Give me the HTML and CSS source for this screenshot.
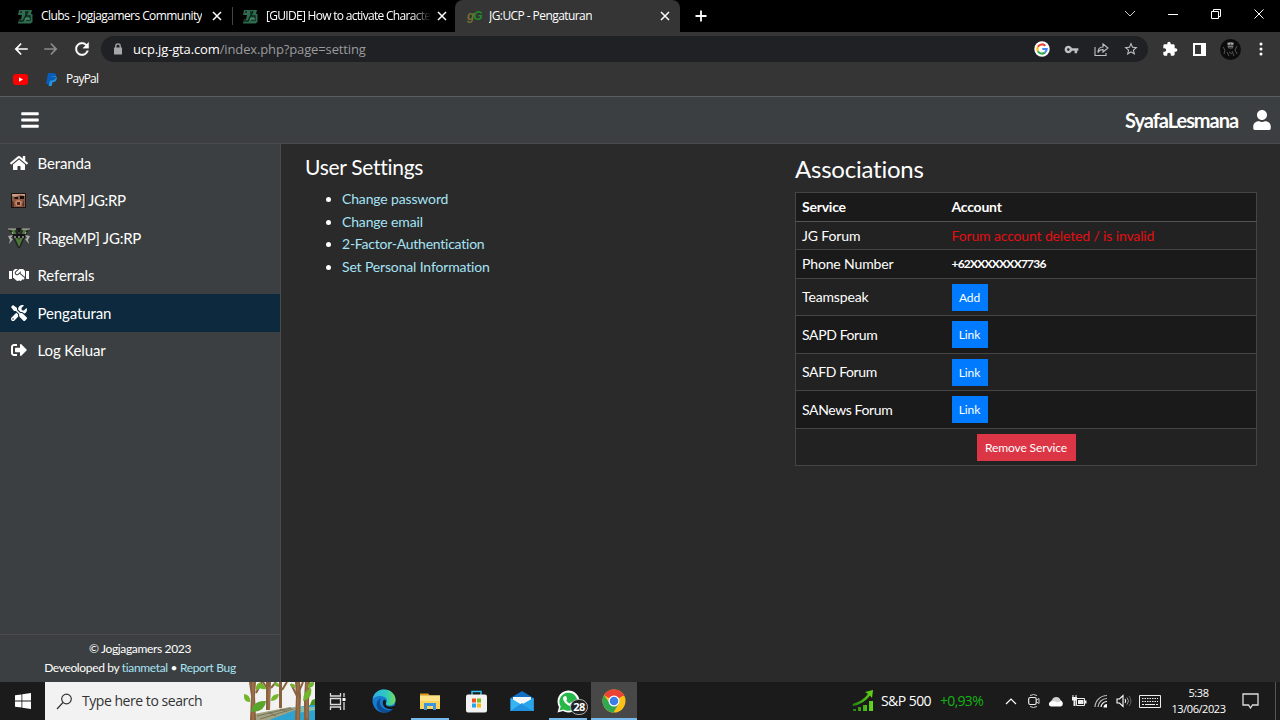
FILE: index.html
```
<!DOCTYPE html>
<html lang="id">
<head>
<meta charset="utf-8">
<title>JG:UCP - Pengaturan</title>
<link rel="stylesheet" href="styles.css">
</head>
<body>
<svg width="0" height="0" class="defs">
    <symbol id="x" viewBox="0 0 10 10"><path d="M1 1l8 8M9 1l-8 8" stroke="#fff" stroke-width="1.5" fill="none"/></symbol>
    <symbol id="jg" viewBox="0 0 15 15"><path d="M1 1h13l-1 4h1.500v8l-2 1.500H0l1-4h2L4 6H0z" fill="#2d6b4f"/><path d="M2 3h6v3L5 12H1M10 2L8 7h4v4H8" stroke="#10251c" stroke-width="1.300" fill="none"/><path d="M4 3h3M7 10h5" stroke="#57a57c" fill="none"/></symbol>
</svg>

<!-- browser -->
<div class="tabs">
    <div class="tab">
        <svg class="fav" width="15" height="15"><use href="#jg"/></svg>
        <span class="title t1">Clubs - Jogjagamers Community</span>
        <svg class="close" width="10" height="10"><use href="#x"/></svg>
    </div>
    <div class="tab second">
        <svg class="fav" width="15" height="15"><use href="#jg"/></svg>
        <span class="title t2">[GUIDE] How to activate Character</span>
        <svg class="close" width="10" height="10"><use href="#x"/></svg>
    </div>
    <div class="tab active">
        <span class="jgfav"><i>g</i><b>G</b></span>
        <span class="title t1">JG:UCP - Pengaturan</span>
        <svg class="close" width="10" height="10"><use href="#x"/></svg>
    </div>
    <svg class="plus" width="12" height="12" viewBox="0 0 12 12"><path d="M6 .5v11M.5 6h11" stroke="#fff" stroke-width="1.800"/></svg>
    <div class="win">
        <span><svg width="12" height="12" viewBox="0 0 12 12"><path d="M1 3l5 5 5-5" stroke="#ccc" fill="none"/></svg></span>
        <span><svg width="12" height="12" viewBox="0 0 12 12"><path d="M1 6.500h10" stroke="#fff"/></svg></span>
        <span><svg width="12" height="12" viewBox="0 0 12 12"><path d="M1.500 3.500h7v7h-7zM3.500 3.500v-2h7v7h-2" stroke="#fff" fill="none"/></svg></span>
        <span><svg width="12" height="12" viewBox="0 0 12 12"><path d="M1.500 1.500l9 9M10.500 1.500l-9 9" stroke="#fff"/></svg></span>
    </div>
</div>

<div class="toolbar">
    <svg class="nav" width="18" height="18" viewBox="0 0 24 24"><path fill="#fff" d="M21 11H7.830l5.090-5.590L11.500 4l-8 8 8 8 1.420-1.410L7.830 13H21v-2z"/></svg>
    <svg class="nav" width="18" height="18" viewBox="0 0 24 24"><path fill="#8a8a8a" d="M3 11h13.170l-5.090-5.590L12.500 4l8 8-8 8-1.420-1.410L16.170 13H3v-2z"/></svg>
    <svg class="nav" width="20" height="20" viewBox="0 0 24 24"><path fill="#fff" stroke="#fff" stroke-width=".4" d="M17.650 6.350C16.200 4.900 14.210 4 12 4c-4.420 0-7.990 3.580-7.990 8s3.570 8 7.990 8c3.730 0 6.840-2.550 7.730-6h-2.080c-.82 2.330-3.040 4-5.650 4-3.310 0-6-2.690-6-6s2.690-6 6-6c1.660 0 3.140.69 4.220 1.780L13 11h7V4l-2.350 2.350z"/></svg>
    <div class="omnibox">
        <svg width="10" height="12" viewBox="0 0 10 12"><path d="M1 4.500h8v7H1z" fill="#a5a8ab"/><path d="M2.800 5V3a2.200 2.200 0 0 1 4.400 0v2" stroke="#a5a8ab" stroke-width="1.300" fill="none"/></svg>
        <p class="url"><b>ucp.jg-gta.com</b>/index.php?page=setting</p>
        <div class="actions">
            <svg width="16" height="16" viewBox="0 0 16 16"><circle cx="8" cy="8" r="7.700" fill="#fff"/><g fill="none" stroke-width="2.100"><path d="M11.300 4.700A4.700 4.700 0 0 0 3.900 5.800" stroke="#ea4335"/><path d="M3.900 5.800a4.700 4.700 0 0 0 0 4.400" stroke="#fbbc05"/><path d="M3.900 10.200a4.700 4.700 0 0 0 7 1.400" stroke="#34a853"/><path d="M10.900 11.600A4.700 4.700 0 0 0 12.700 8H8.300" stroke="#4285f4"/></g></svg>
            <svg width="15" height="15" viewBox="0 0 24 24"><path fill="#bdc1c6" d="M12.650 10C11.830 7.670 9.610 6 7 6c-3.310 0-6 2.690-6 6s2.690 6 6 6c2.610 0 4.830-1.670 5.650-4H17v4h4v-4h2v-4H12.650zM7 14c-1.100 0-2-.9-2-2s.9-2 2-2 2 .9 2 2-.9 2-2 2z"/></svg>
            <svg width="15" height="15" viewBox="0 0 15 15"><path d="M1 5v8.500h11V11M4 10.500c0-3.500 2-5.500 5-5.500V2l5 4-5 4V7.500c-2.500 0-4 .8-5 3z" stroke="#bdc1c6" stroke-width="1.100" fill="none"/></svg>
            <svg width="16" height="16" viewBox="0 0 24 24"><path fill="#bdc1c6" d="M22 9.240l-7.190-.62L12 2 9.190 8.630 2 9.240l5.460 4.730L5.820 21 12 17.270 18.180 21l-1.630-7.030L22 9.240zM12 15.400l-3.760 2.270 1-4.280-3.320-2.880 4.380-.38L12 6.100l1.710 4.040 4.380.38-3.320 2.880 1 4.280L12 15.400z"/></svg>
        </div>
    </div>
    <div class="ext">
        <svg width="16" height="16" viewBox="0 0 24 24"><path fill="#fff" d="M20.500 11H19V7c0-1.100-.9-2-2-2h-4V3.500C13 2.120 11.880 1 10.500 1S8 2.120 8 3.500V5H4c-1.100 0-1.990.9-1.990 2v3.800H3.500c1.490 0 2.700 1.210 2.700 2.700s-1.210 2.700-2.700 2.700H2V20c0 1.100.9 2 2 2h3.800v-1.500c0-1.490 1.210-2.700 2.700-2.700 1.490 0 2.700 1.210 2.700 2.700V22H17c1.100 0 2-.9 2-2v-4h1.500c1.380 0 2.500-1.120 2.500-2.500S21.880 11 20.500 11z"/></svg>
        <svg width="13" height="13" viewBox="0 0 13 13"><path fill="#fff" d="M0 0h13v13H0zM2 2v9h6V2z" fill-rule="evenodd"/></svg>
        <svg width="21" height="21" viewBox="0 0 21 21"><circle cx="10.500" cy="10.500" r="10.500" fill="#0c0c0c"/><path d="M7 4q3.500-2 7 0l-1 5q-2.500 2-5 0z" fill="#777"/><path d="M7 6h7M8.500 9h4" stroke="#111"/><path d="M3 8l2 3-1 4M17 7l-2 4 2 4M7 13l2 4M12 12l2 5M9 13l3 2" stroke="#555" fill="none"/><circle cx="9" cy="5" r=".8" fill="#eee"/><circle cx="12" cy="5" r=".8" fill="#eee"/></svg>
        <svg width="4" height="14" viewBox="0 0 4 14"><g fill="#fff"><circle cx="2" cy="2" r="1.500"/><circle cx="2" cy="7" r="1.500"/><circle cx="2" cy="12" r="1.500"/></g></svg>
    </div>
</div>
<div class="bookmarks">
    <svg width="15" height="11" viewBox="0 0 15 11"><rect width="15" height="11" rx="3" fill="#f00"/><path d="M6 3.300l4 2.200-4 2.200z" fill="#fff"/></svg>
    <svg class="pp" width="11" height="13" viewBox="0 0 11 13"><path d="M2 0h5c3 0 3.500 2 3 4-.6 2.500-2.400 3.500-5 3.500H4L3 11H0z" fill="#0b5cb8"/><path d="M4 3h5c2 .5 2 2 1.600 3.300C10 8.500 8.500 9.300 6.500 9.300L5.700 13H2.500L3 11l1-3.500h1c2.600 0 4.400-1 5-3.500" fill="#1d96e8"/></svg>
    <span>PayPal</span>
</div>

<!-- page -->
<div class="header">
    <svg class="bars" width="18" height="20" viewBox="0 0 448 512"><path fill="#fff" d="M16 132h416c9 0 16-7 16-16V76c0-9-7-16-16-16H16C7 60 0 67 0 76v40c0 9 7 16 16 16zm0 160h416c9 0 16-7 16-16v-40c0-9-7-16-16-16H16c-9 0-16 7-16 16v40c0 9 7 16 16 16zm0 160h416c9 0 16-7 16-16v-40c0-9-7-16-16-16H16c-9 0-16 7-16 16v40c0 9 7 16 16 16z"/></svg>
    <div class="user">
        <b>SyafaLesmana</b>
        <svg width="18" height="20" viewBox="0 0 448 512"><path fill="#fff" d="M224 256c70.700 0 128-57.300 128-128S294.700 0 224 0 96 57.300 96 128s57.300 128 128 128zm89.600 32h-16.700c-22.200 10.200-46.900 16-72.900 16s-50.600-5.800-72.900-16h-16.700C60.200 288 0 348.200 0 422.400V464c0 26.500 21.500 48 48 48h352c26.500 0 48-21.500 48-48v-41.600c0-74.200-60.200-134.400-134.400-134.400z"/></svg>
    </div>
</div>
<div class="page">
    <div class="sidebar">
        <ul>
            <li><span class="ico"><svg width="18" height="16" viewBox="0 0 576 512"><path fill="#fff" d="M280.370 148.260L96 300.110V464a16 16 0 0 0 16 16l112.060-.29a16 16 0 0 0 15.920-16V368a16 16 0 0 1 16-16h64a16 16 0 0 1 16 16v95.640a16 16 0 0 0 16 16.050L464 480a16 16 0 0 0 16-16V300L295.670 148.260a12.190 12.190 0 0 0-15.300 0zM571.600 251.470L488 182.560V44.050a12 12 0 0 0-12-12h-56a12 12 0 0 0-12 12v72.610L318.470 43a48 48 0 0 0-61 0L4.340 251.470a12 12 0 0 0-1.600 16.900l25.500 31A12 12 0 0 0 45.150 301l235.220-193.740a12.190 12.190 0 0 1 15.300 0L530.900 301a12 12 0 0 0 16.900-1.600l25.500-31a12 12 0 0 0-1.700-16.930z"/></svg></span>Beranda</li>
            <li class="samp"><span class="ico"><svg width="15" height="15" viewBox="0 0 15 15"><path d="M0 0h15v15H0z" fill="#1c1310"/><path d="M1 1h13v13H1z" fill="#8d5a45"/><path d="M1 1h13v2L9 2 4 4 1 3z" fill="#c59a80"/><path d="M3 4h4v2H4zM9 3h4v3H9z" fill="#18100e"/><path d="M4 9q3-4 7 0l-1 4H5z" fill="#c58466"/><path d="M6 9h3v3H6z" fill="#4a241b"/><path d="M1 7l2 3v4H1zM13 7v7l-2-2z" fill="#5a3022"/></svg></span>[SAMP] JG:RP</li>
            <li class="rage"><span class="ico"><svg width="24" height="20" viewBox="0 0 24 20"><path d="M1 0h9v2L12 8l3-6V0h8v2l-2 1-8 17h-2L3 3 1 2z" fill="#222"/><path d="M2 1h7L8 3l4 9 4-9-1-2h7l-3 2-7 16L5 3z" fill="#4d7a38"/><path d="M1 1h8M15 1h8M5 4l1 2M19 4l-1 2" stroke="#c4c4c4" fill="none"/><path d="M6 6h12v4H6z" fill="#151515"/><path d="M1 8l5-1-2 3 2 1-4 5 1-4zM23 8l-5-1 2 3-2 1 4 5-1-4z" fill="#aaa"/><path d="M7 9h2M11 9h2M15 9h2" stroke="#ddd"/><path d="M10 0h4l-1 4h-2z" fill="#141414"/></svg></span>[RageMP] JG:RP</li>
            <li><span class="ico"><svg width="20" height="16" viewBox="0 0 640 512"><path fill="#fff" d="M434.700 64h-85.900c-8 0-15.700 3-21.600 8.400l-98.300 90c-.1.1-.2.3-.3.4-16.600 15.600-16.300 40.500-2.100 56 12.700 13.900 39.400 17.600 56.100 2.700.1-.1.3-.1.4-.2l79.900-73.200c6.500-5.900 16.700-5.500 22.600 1 6 6.500 5.500 16.600-1 22.600l-26.100 23.900L504 313.800c2.900 2.400 5.500 5 7.900 7.700V128l-54.600-54.600c-5.900-6-14.100-9.400-22.600-9.400zM544 128.200v223.900c0 17.700 14.300 32 32 32h64V128.200h-96zM0 384h64c17.700 0 32-14.300 32-32V128.200H0V384zm483.900-45.300L334.600 217.500l-30 27.500c-29.700 27.100-75.200 24.500-101.700-4.400-26.900-29.400-24.800-74.900 4.400-101.700L289.100 64h-83.800c-8.500 0-16.600 3.400-22.600 9.400L128 128v223.900h18.300l90.500 81.900c27.400 22.300 67.700 18.100 90-9.300l.2-.2 17.900 15.500c15.900 13 39.400 10.500 52.300-5.400l31.400-38.600 5.400 4.400c13.700 11.100 33.900 9.100 45-4.700l9.500-11.700c11.200-13.800 9.100-33.900-4.600-45.100z"/></svg></span>Referrals</li>
            <li class="on"><span class="ico"><svg width="16" height="16" viewBox="0 0 512 512"><path fill="#fff" d="M501.100 395.700L384 278.600c-23.100-23.100-57.600-27.600-85.400-13.900L192 158.100V96L64 0 0 64l96 128h62.100l106.600 106.600c-13.600 27.800-9.200 62.300 13.900 85.400l117.100 117.100c14.600 14.600 38.200 14.600 52.700 0l52.700-52.700c14.500-14.600 14.500-38.200 0-52.700zM331.700 225c28.300 0 54.900 11 74.900 31l19.400 19.400c15.800-6.900 30.800-16.500 43.800-29.500 37.100-37.100 49.700-89.300 37.900-136.700-2.200-9-13.500-12.100-20.100-5.500l-74.400 74.400-67.900-11.300L334 98.900l74.400-74.400c6.600-6.600 3.400-17.900-5.700-20.200-47.400-11.700-99.600.9-136.600 37.900-28.500 28.500-41.900 66.100-41.200 103.600l82.100 82.100c8.100-1.900 16.500-2.900 24.700-2.900zm-103.900 82l-56.700-56.700L18.700 402.800c-25 25-25 65.500 0 90.500s65.500 25 90.500 0l123.600-123.600c-7.600-19.900-9.900-41.600-5-62.700zM64 472c-13.200 0-24-10.800-24-24s10.700-24 24-24 24 10.700 24 24-10.700 24-24 24z"/></svg></span>Pengaturan</li>
            <li><span class="ico"><svg width="16" height="16" viewBox="0 0 512 512"><path fill="#fff" d="M497 273L329 441c-15 15-41 4.500-41-17v-96H152c-13.300 0-24-10.700-24-24v-96c0-13.300 10.700-24 24-24h136V88c0-21.400 25.900-32 41-17l168 168c9.300 9.400 9.300 24.600 0 34zM192 436v-40c0-6.600-5.400-12-12-12H96c-17.700 0-32-14.300-32-32V160c0-17.700 14.300-32 32-32h84c6.600 0 12-5.400 12-12V76c0-6.600-5.400-12-12-12H96c-53 0-96 43-96 96v192c0 53 43 96 96 96h84c6.600 0 12-5.400 12-12z"/></svg></span>Log Keluar</li>
        </ul>
        <div class="foot">
            <p>© Jogjagamers 2023</p>
            <p>Deveoloped by <a>tianmetal</a> • <a>Report Bug</a></p>
        </div>
    </div>
    <div class="content">
        <div class="settings">
            <h4>User Settings</h4>
            <ul>
                <li><a>Change password</a></li>
                <li><a>Change email</a></li>
                <li class="tfa"><a>2-Factor-Authentication</a></li>
                <li><a>Set Personal Information</a></li>
            </ul>
        </div>
        <div class="assoc">
            <h3>Associations</h3>
            <table>
                <tr class="h29 dark"><th class="c1">Service</th><th>Account</th></tr>
                <tr class="h28"><td>JG Forum</td><td class="red">Forum account deleted / is invalid</td></tr>
                <tr class="h29 dark"><td>Phone Number</td><td class="phone">+62XXXXXXX7736</td></tr>
                <tr class="h37"><td>Teamspeak</td><td><button>Add</button></td></tr>
                <tr class="h38 dark"><td class="caps">SAPD Forum</td><td><button>Link</button></td></tr>
                <tr class="h37"><td class="caps">SAFD Forum</td><td><button>Link</button></td></tr>
                <tr class="h38 dark"><td class="caps">SANews Forum</td><td><button>Link</button></td></tr>
                <tr class="h37"><td colspan="2" class="center"><button class="danger">Remove Service</button></td></tr>
            </table>
        </div>
    </div>
</div>

<!-- taskbar -->
<div class="taskbar">
    <div class="start"><svg width="16" height="16" viewBox="0 0 16 16"><path fill="#fff" d="M0 2.300l6.500-.9v6.200H0zM7.300 1.300L16 0v7.600H7.300zM0 8.400h6.500v6.200L0 13.700zM7.300 8.400H16V16l-8.700-1.300z"/></svg></div>
    <div class="search">
        <svg width="17" height="17" viewBox="0 0 17 17"><circle cx="10.500" cy="6" r="4.800" fill="none" stroke="#333" stroke-width="1.200"/><path d="M7 9.500L1 16" stroke="#333" stroke-width="1.200"/></svg>
        <span>Type here to search</span>
        <svg class="trees" width="71" height="38" viewBox="0 0 71 38">
            <path d="M38 28l33-6v16H25z" fill="#2fa3cf"/><path d="M48 25h23v3l-17 3z" fill="#7fc0b0"/>
            <path d="M10 32l36-7 8 2-29 11H10z" fill="#a3a282"/><path d="M13 34l34-8M16 37l33-10M24 30l8 4M36 27l7 3" stroke="#77745a" fill="none"/>
            <path d="M5 0h7l-1 14 1 24H6l1-24zM22 0h5l-1 28h-4zM35 0h3v26h-3zM51 0h5l1 14-1 24h-5l1-24zM61 0h5l-1 18v20h-5V18z" fill="#8a613f"/>
            <path d="M9 0v38M25 5v23M54 0v38M63 0v36" stroke="#a87e56" fill="none"/><path d="M12 11l6-11M19 0l5 8M38 8l5-8M47 2l6 12 6-14M27 6l5-6" stroke="#8a613f" stroke-width="2" fill="none"/>
            <path d="M7 30q2-12 15-11-1 11-15 11z" fill="#58a52c"/><path d="M6 20Q-1 20 0 12q7 1 6 8zM22 7q-8 1-9-5 8-2 9 5zM27 19q0-7 8-7-1 7-8 7zM35 5q-5-1-5-4 6-1 5 4zM59 19q0-10 8-13 2 10-8 13zM64 6q-1-6 6-6 1 5-6 6zM51 6q-5-1-5-4 6-1 5 4zM12 8q-1-6 5-8 1 7-5 8z" fill="#72b62d"/>
            <path d="M68 18l3-1v6h-5z" fill="#4d941f"/>
        </svg>
    </div>
    <div class="apps">
        <div class="app"><svg width="17" height="17" viewBox="0 0 17 17"><path d="M1.500 0v3h10V0M1.500 17v-3h10v3M1.500 5.500h10v6h-10zM15 0v4M15 9v8" stroke="#ddd" stroke-width="1.300" fill="none"/><path d="M13.500 5h3v3h-3z" fill="#fff"/></svg></div>
        <div class="app"><svg width="24" height="24" viewBox="0 0 24 24">
            <defs><linearGradient id="e"><stop offset="0" stop-color="#2eabe8"/><stop offset=".6" stop-color="#2fc9bd"/><stop offset="1" stop-color="#6fdc5b"/></linearGradient></defs>
            <circle cx="12" cy="12" r="11.500" fill="#167cce"/><path d="M.7 10C2 3 7 .5 12 .5c7 0 11.500 5 11.500 10 0 4-3 6-6 6-2.500 0-4-1-3.500-2.500 1-1 1.300-2 1-3C14 8 11 7 8 7 4 7 1.500 9 .7 10z" fill="url(#e)"/><path d="M9 9c-3 5 0 11 6 12 3 .5 6-1 7.500-3.500-2 5-8 7.500-13 5.500C3 20 3 12 9 9z" fill="#0d4d95"/><path d="M14 14c-1 2 1 4 5 3.500l4-.7c.4 1-.5 2-1.500 2.700-5 2-12-1-10.500-7.500.5-1 1.500-1.500 2.500-1z" fill="#181818"/></svg></div>
        <div class="app run"><svg width="22" height="19" viewBox="0 0 22 19"><path d="M1 1.500h8l2 2H1z" fill="#e59a16"/><path d="M1 3.500h20V17H1z" fill="#fdd45b"/><path d="M1 3.500h20V9H1z" fill="#ffe287"/><path d="M5 11h12v7h-3v-4H8v4H5z" fill="#3c95df"/></svg></div>
        <div class="app"><svg width="23" height="23" viewBox="0 0 23 23"><path d="M7 6V1.500h9V6" stroke="#35c1ef" stroke-width="1.500" fill="none"/><rect x="1" y="4.500" width="21" height="18" rx="2" fill="#f2f2f2"/><path d="M7 8.500h4v4H7z" fill="#f04f23"/><path d="M12 8.500h4v4h-4z" fill="#7fba15"/><path d="M7 13.500h4v4H7z" fill="#22a4ee"/><path d="M12 13.500h4v4h-4z" fill="#fdb813"/></svg></div>
        <div class="app"><svg width="24" height="22" viewBox="0 0 24 22"><path d="M.5 8L12 1l11.500 7v13H.5z" fill="#1270c4"/><path d="M3 7h18v7l-9 3-9-3z" fill="#f4f8fb"/><path d="M.5 8L12 15l11.500-7v13H.5z" fill="#36b3f1"/><path d="M.5 21L12 13l11.500 8z" fill="#2090df"/><path d="M.5 8L12 14.500 23.500 8v13z" fill="#29a5ea"/></svg></div>
        <div class="app run wa"><svg width="23" height="23" viewBox="0 0 23 23"><path d="M.5 22.500L2 17a11 11 0 1 1 4 4z" fill="#fff"/><path d="M2.500 20.500l1.300-4a9 9 0 1 1 3 2.900z" fill="#26b848"/><path d="M7 6.500l2-.5 1.200 3-1 1.200c.8 1.600 2 2.600 3.600 3.200l1.200-1.300 2.800 1.300c.2 1.600-1.300 2.800-2.800 2.700C10 15.500 6.500 12 6 8.500 6 7.500 6.300 7 7 6.500z" fill="#fff"/></svg><span class="badge">28</span></div>
        <div class="app run cur"><svg width="24" height="24" viewBox="0 0 24 24"><circle cx="12" cy="12" r="11.500" fill="#fbc116"/><path d="M12 12L2 6.300a11.500 11.500 0 0 1 20 0z" fill="#ea4335"/><path d="M2 6.300a11.500 11.500 0 0 0 9.400 17.200L16.500 15 7.500 14z" fill="#30a852"/><path d="M12 6.300h10" stroke="#ea4335"/><circle cx="12" cy="12" r="5.500" fill="#fff"/><circle cx="12" cy="12" r="4.300" fill="#3b7de9"/></svg></div>
    </div>
    <div class="stock">
        <svg width="22" height="22" viewBox="0 0 22 22"><defs><linearGradient id="g"><stop offset="0" stop-color="#218015"/><stop offset="1" stop-color="#67d916"/></linearGradient></defs><path d="M1 19h3v2H1zM6 17h3v4H6zM11 15h4v6h-4zM17 11h4v10h-4z" fill="url(#g)"/><path d="M.5 14Q11 11 16 4l-3-2 8-2-1 8-2-2.500Q12 14 1 16z" fill="url(#g)"/></svg>
        <span class="sp">S&amp;P 500</span>
        <span class="up">+0,93%</span>
    </div>
    <div class="tray">
        <span><svg width="12" height="8" viewBox="0 0 12 8"><path d="M1 7l5-5 5 5" stroke="#fff" stroke-width="1.200" fill="none"/></svg></span>
        <span><svg width="12" height="16" viewBox="0 0 12 16"><rect x=".7" y="4.500" width="7.500" height="7" rx="1.500" stroke="#eee" stroke-width="1.200" fill="none"/><path d="M8.500 7l2.500-1.500v5L8.500 9M2 2.500q3.500-2 7 0M2 13.500q3.500 2 7 0" stroke="#ccc" fill="none"/></svg></span>
        <span><svg width="16" height="11" viewBox="0 0 16 11"><path d="M4 10a3.500 3.500 0 0 1 0-6 4.500 4.500 0 0 1 8.500 0 3.300 3.300 0 0 1 0 6z" fill="#d2d2d2"/><path d="M3 10.500a2.500 2.500 0 0 1 1-5q3-1 5 1l4-1.500a3 3 0 0 1 0 5.500z" fill="#fff"/></svg></span>
        <span><svg width="16" height="13" viewBox="0 0 16 13"><path d="M5.500 3.500h8v7h-8z" stroke="#eee" fill="none"/><path d="M7 5h5.500v4H7zM14 5.500h1.500v3H14zM1 2h5v3.500H4.500V11h-2V5.500H1zM1.500 0h1v2h-1zM4.500 0h1v2h-1z" fill="#eee"/></svg></span>
        <span><svg width="14" height="14" viewBox="0 0 14 14"><g fill="none" stroke="#bbb" stroke-width="1.200"><path d="M1 13A12 12 0 0 1 13 1.500"/><path d="M4 13a9 9 0 0 1 9-8.500"/><path d="M7 13a6 6 0 0 1 6-5.500" stroke="#fff"/></g><path d="M13 10v3.500H9.500A3.500 3.500 0 0 1 13 10z" fill="#fff"/></svg></span>
        <span><svg width="16" height="14" viewBox="0 0 16 14"><path d="M1 5h2.500L7 1.500v11L3.500 9H1zM9 5q1.500 2 0 4" stroke="#fff" stroke-width="1.100" fill="none"/><path d="M11 3.500q3 3.500 0 7" stroke="#999" fill="none"/><path d="M13 2q4 5 0 10" stroke="#666" fill="none"/></svg></span>
        <span class="kb"><svg width="22" height="13" viewBox="0 0 22 13"><path d="M.5.500h21v12H.5z" stroke="#eee" fill="none"/><path d="M3 3.500h16M3 6.500h16" stroke="#eee" stroke-dasharray="1.500 1"/><path d="M3 9.500h2M6 9.500h10M17 9.500h2" stroke="#eee"/></svg></span>
        <div class="clock">5:38<br>13/06/2023</div>
        <span class="notif"><svg width="17" height="16" viewBox="0 0 17 16"><path d="M1 1h15v11h-5.500L8.500 15l-2-3H1z" stroke="#ddd" stroke-width="1.300" fill="none"/></svg></span>
    </div>
</div>
</body>
</html>
```
FILE: styles.css
```
*{box-sizing:border-box;}
body,ul,li,p,h3,h4{margin:0;padding:0;}
body{width:1280px;height:720px;overflow:hidden;background:#2a2a2a;color:#fff;font:14px/22.5px Lato,sans-serif;display:flex;flex-direction:column;}
svg{display:block;flex:none;}
.defs{position:absolute;}

/* browser */
.tabs,.toolbar,.bookmarks,.taskbar{font-family:"Open Sans",sans-serif;font-size:12px;display:flex;align-items:center;flex:none;}
.tabs{height:32px;background:#000;}
.tab{display:flex;align-items:center;height:32px;width:233px;padding:0 10px 0 18px;border-right:1px solid #3c3c3c;border-image:linear-gradient(#000 25%,#444 25%,#444 75%,#000 75%) 1;border-width:0 1px 0 0;}
.tab .fav{margin-right:8px;}
.title{white-space:nowrap;overflow:hidden;letter-spacing:-.57px;}
.close{margin-left:auto;}
.tab.second{width:222px;padding:0 8px 0 10px;border:0;}
.t2{width:165px;letter-spacing:-.7px;-webkit-mask-image:linear-gradient(90deg,#000 88%,transparent);}
.tab.active{width:225px;border:0;background:#353535;border-radius:8px 8px 0 0;padding:0 10px 0 12px;}
.jgfav{width:22px;font:bold italic 12px/14px "Liberation Sans",sans-serif;letter-spacing:-1px;color:#6f7034;}
.jgfav b{color:#1f8b28;}
.plus{margin-left:15px;}
.win{display:flex;margin-left:auto;padding-bottom:4px;}
.win span{width:43px;display:flex;justify-content:center;}
.toolbar{height:34px;background:#353535;}
.nav{margin-left:12px;}
.nav+.nav{margin-left:12px;}
.omnibox{width:1047px;height:26px;margin-left:9px;border-radius:13px;background:#202124;display:flex;align-items:center;padding:0 9px 0 12px;}
.url{margin-left:10px;font-size:13px;letter-spacing:-.13px;color:#9a9b9d;}
.url b{font-weight:normal;color:#fff;}
.actions{display:flex;margin-left:auto;gap:14.5px;align-items:center;}
.ext{display:flex;align-items:center;margin-left:14px;}
.ext svg+svg{margin-left:15px;}
.ext svg:nth-child(3){margin-left:14px;}
.ext svg:nth-child(4){margin-left:18px;}
.bookmarks{height:30px;background:#353535;padding:0 0 4px 13px;}
.bookmarks .pp{margin-left:18px;}
.bookmarks span{margin-left:9px;letter-spacing:-.75px;}

/* page */
.header{height:48px;flex:none;background:#3c3f41;border-top:1px solid #5a5e60;border-bottom:1px solid #4b4b4b;display:flex;align-items:center;padding:0 9px 0 21px;}
.user{margin-left:auto;display:flex;align-items:center;}
.user b{font-size:20px;letter-spacing:-1.05px;margin-right:15px;}
.page{display:flex;height:538px;flex:none;}
.sidebar{width:281px;background:#3c3f41;border-right:1px solid #4b4b4b;display:flex;flex-direction:column;}
.sidebar ul{list-style:none;}
.sidebar li{height:37.5px;display:flex;align-items:center;font-size:15px;letter-spacing:-.12px;}
.sidebar .samp{letter-spacing:-.39px;}
.sidebar .rage{letter-spacing:-.24px;}
.sidebar .on{background:#0d293e;}
.ico{width:37.5px;display:flex;justify-content:center;}
.foot{margin-top:auto;height:48px;border-top:1px solid #4b4b4b;padding-top:4px;text-align:center;font-size:12px;line-height:19px;letter-spacing:-.34px;}
a{color:#a5e3f5;}
.content{flex:1;display:flex;}
.settings{width:514px;padding-left:24px;}
h4{font-size:21px;font-weight:normal;line-height:25px;letter-spacing:-.29px;margin:10px 0 9px;}
.settings ul{padding-left:37px;letter-spacing:-.15px;}
.settings .tfa{letter-spacing:-.24px;}
.assoc{width:461px;}
h3{font-size:24px;font-weight:normal;line-height:30px;letter-spacing:-.23px;margin:10px 0 8px;}
table{width:462px;border-collapse:collapse;border:1px solid #454545;background:#222;letter-spacing:-.14px;line-height:20px;}
tr{border-top:1px solid #454545;}
.dark{background:#1a1a1a;}
.h28{height:28px;border-top-color:#555;}
.h29{height:29px;}
.h37{height:37px;}
.h38{height:38px;}
th,td{text-align:left;padding:0 6px;}
th{letter-spacing:-.22px;}
.c1{width:150px;}
.red{color:#e40d12;}
.phone{font-size:12px;font-weight:bold;letter-spacing:-.78px;}
.caps{letter-spacing:-.38px;}
.center{text-align:center;}
button{display:block;height:27px;width:36px;padding:0;border:0;background:#007bff;color:#fff;font:12px/27px Lato,sans-serif;letter-spacing:-.1px;}
.danger{width:99px;margin:0 auto;background:#dc3545;}

/* taskbar */
.taskbar{height:38px;background:#1b1b1b;}
.start{width:45px;padding-left:15px;}
.search{width:270px;height:38px;background:#f2f2f2;color:#333;display:flex;align-items:center;padding-left:11px;font-size:14px;letter-spacing:-.46px;}
.search span{margin-left:9px;}
.trees{margin-left:auto;}
.apps{display:flex;}
.app{width:46px;height:38px;display:flex;align-items:center;justify-content:center;position:relative;}
.app:first-child{padding-right:2px;}
.app.run:after{content:"";position:absolute;left:4px;right:4px;bottom:0;height:2px;background:#76b9ed;}
.app.cur{background:#484848;}
.app.cur:after{left:0;right:0;}
.badge{position:absolute;left:25px;top:17px;width:18px;height:16px;border:1px solid #aaa;border-radius:8px;background:#222;font-size:11px;line-height:14px;text-align:center;font-weight:bold;letter-spacing:-.5px;}
.stock{display:flex;align-items:center;margin-left:215px;font-size:14px;}
.stock .sp{margin-left:7px;letter-spacing:-.56px;}
.stock .up{margin-left:9px;letter-spacing:-.7px;color:#13b313;}
.tray{display:flex;align-items:center;margin-left:auto;margin-right:4px;border-right:1px solid #555;height:38px;padding-right:8px;}
.tray span{width:22.5px;display:flex;justify-content:center;}
.tray .kb{width:29px;}
.clock{width:69px;text-align:center;font-size:11px;line-height:16px;letter-spacing:-.44px;}
.tray .notif{width:34px;}
```
